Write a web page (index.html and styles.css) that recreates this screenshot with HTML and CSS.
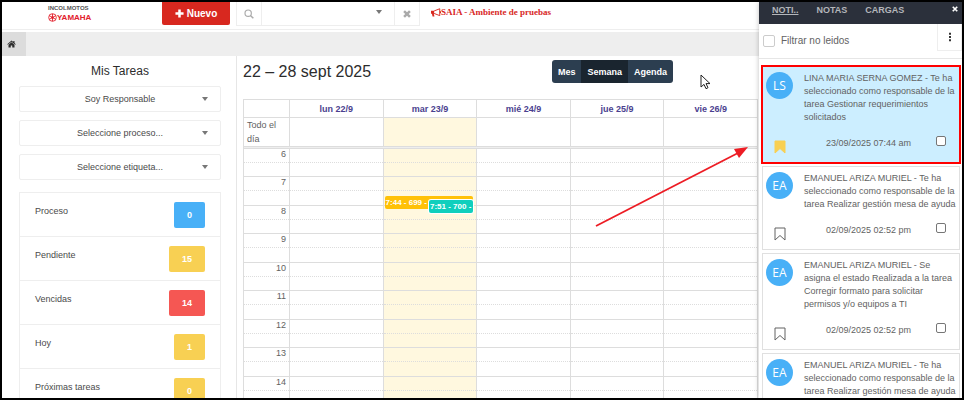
FILE: index.html
```html
<!DOCTYPE html>
<html lang="es">
<head>
<meta charset="UTF-8" />
<meta name="viewport" content="width=device-width, initial-scale=1" />
<title>SAIA - Mis Tareas</title>
<link rel="stylesheet" href="styles.css">
</head>
<body>

<div class="app">
  <div class="workspace">

    <!-- Barra superior -->
    <header class="topbar">
      <div class="logo">
        <span class="logo-company">INCOLMOTOS</span>
        <span class="logo-brand">
          <svg class="logo-mark" viewBox="0 0 20 20" fill="none" stroke="#e2202c" stroke-width="2">
            <circle cx="10" cy="10" r="8.5"/>
            <circle cx="10" cy="10" r="2" fill="#e2202c"/>
            <path d="M10 2v16M3 6l14 8M3 14l14-8"/>
          </svg>YAMAHA
        </span>
      </div>
      <button class="btn-new" type="button">
        <svg viewBox="0 0 10 10" fill="#fff"><path d="M3.6 0.5h2.8v3.1h3.1v2.8H6.4v3.1H3.6V6.4H0.5V3.6h3.1z"/></svg>
        Nuevo
      </button>
      <div class="search">
        <button class="search-btn" type="button" aria-label="Buscar">
          <svg viewBox="0 0 12 12" fill="none" stroke="#aaa" stroke-width="1.4"><circle cx="5" cy="5" r="3.8"/><path d="M8 8l3.2 3.2" stroke-width="1.8"/></svg>
        </button>
        <div class="select-wrap search-select">
          <select aria-label="Búsqueda"><option></option></select>
        </div>
        <button class="search-btn" type="button" aria-label="Limpiar">
          <svg viewBox="0 0 12 12" stroke="#aaa" stroke-width="3"><path d="M2.5 2.5l7 7M9.5 2.5l-7 7"/></svg>
        </button>
      </div>
      <div class="env">
        <svg viewBox="0 0 16 14" fill="#d8281f">
          <path d="M0 4h5v5H0zM1.5 9h3l1 4.500h-3z"/>
          <path d="M5 4.500L14 1v11L5 8.500" fill="none" stroke="#d8281f" stroke-width="1.500"/>
          <path d="M14 5h2v3h-2z"/>
        </svg>SAIA - Ambiente de pruebas
      </div>
    </header>

    <nav class="tabbar">
      <a class="tab-home" href="#" aria-label="Inicio">
        <svg viewBox="0 0 18 16" fill="#2c2c2c"><path d="M9 1L0.500 8.300l1.100 1.300L9 3.400l7.400 6.200 1.100-1.300L15 6.100V1.800h-2.400V4z"/><path d="M9 4.600L3 9.600V15h4.500v-4h3v4H15V9.600z"/></svg>
      </a>
    </nav>

    <div class="columns">
      <!-- Mis tareas -->
      <aside class="tasks">
        <h2>Mis Tareas</h2>
        <div class="select-wrap">
          <select aria-label="Rol"><option>Soy Responsable</option></select>
        </div>
        <div class="select-wrap">
          <select aria-label="Proceso"><option>Seleccione proceso...</option></select>
        </div>
        <div class="select-wrap">
          <select aria-label="Etiqueta"><option>Seleccione etiqueta...</option></select>
        </div>
        <ul class="task-list">
          <li><span>Proceso</span><button class="count blue" type="button">0</button></li>
          <li><span>Pendiente</span><button class="count yellow" type="button">15</button></li>
          <li><span>Vencidas</span><button class="count red" type="button">14</button></li>
          <li><span>Hoy</span><button class="count yellow" type="button">1</button></li>
          <li><span>Próximas tareas</span><button class="count yellow" type="button">0</button></li>
        </ul>
      </aside>

      <!-- Calendario -->
      <main class="calendar">
        <div class="cal-toolbar">
          <h1>22 – 28 sept 2025</h1>
          <div class="views">
            <button type="button">Mes</button>
            <button class="active" type="button">Semana</button>
            <button type="button">Agenda</button>
          </div>
        </div>
        <table class="week">
          <colgroup><col class="axis-col"><col><col class="today"><col><col><col></colgroup>
          <thead>
            <tr><th></th><th>lun 22/9</th><th>mar 23/9</th><th>mié 24/9</th><th>jue 25/9</th><th>vie 26/9</th></tr>
          </thead>
          <tbody class="all-day">
            <tr><td>Todo el día</td><td></td><td></td><td></td><td></td><td></td></tr>
            <tr class="divider"><td colspan="6"></td></tr>
          </tbody>
          <tbody class="slots">
            <tr><td>6</td><td></td><td></td><td></td><td></td><td></td></tr>
            <tr><td></td><td></td><td></td><td></td><td></td><td></td></tr>
            <tr><td>7</td><td></td><td></td><td></td><td></td><td></td></tr>
            <tr>
              <td></td><td></td>
              <td class="has-events">
                <a class="event first" href="#">7:44 - 699 -</a>
                <a class="event second" href="#">7:51 - 700 -</a>
              </td>
              <td></td><td></td><td></td>
            </tr>
            <tr><td>8</td><td></td><td></td><td></td><td></td><td></td></tr>
            <tr><td></td><td></td><td></td><td></td><td></td><td></td></tr>
            <tr><td>9</td><td></td><td></td><td></td><td></td><td></td></tr>
            <tr><td></td><td></td><td></td><td></td><td></td><td></td></tr>
            <tr><td>10</td><td></td><td></td><td></td><td></td><td></td></tr>
            <tr><td></td><td></td><td></td><td></td><td></td><td></td></tr>
            <tr><td>11</td><td></td><td></td><td></td><td></td><td></td></tr>
            <tr><td></td><td></td><td></td><td></td><td></td><td></td></tr>
            <tr><td>12</td><td></td><td></td><td></td><td></td><td></td></tr>
            <tr><td></td><td></td><td></td><td></td><td></td><td></td></tr>
            <tr><td>13</td><td></td><td></td><td></td><td></td><td></td></tr>
            <tr><td></td><td></td><td></td><td></td><td></td><td></td></tr>
            <tr><td>14</td><td></td><td></td><td></td><td></td><td></td></tr>
            <tr><td></td><td></td><td></td><td></td><td></td><td></td></tr>
          </tbody>
        </table>
      </main>
    </div>
  </div>

  <!-- Panel de notificaciones -->
  <section class="panel">
    <div class="panel-tabs">
      <a class="active" href="#">NOTI..</a>
      <a href="#">NOTAS</a>
      <a href="#">CARGAS</a>
      <button class="close" type="button" aria-label="Cerrar">
        <svg viewBox="0 0 8 8" stroke="#fff" stroke-width="2.200"><path d="M1 1l6 6M7 1l-6 6"/></svg>
      </button>
    </div>
    <div class="filter">
      <label><input type="checkbox"> Filtrar no leidos</label>
      <button class="more" type="button" aria-label="Opciones">
        <svg viewBox="0 0 4 12" fill="#333"><path d="M0.800 1h2.400v2.400H0.800zM0.800 4.800h2.400v2.400H0.800zM0.800 8.600h2.400V11H0.800z"/></svg>
      </button>
    </div>
    <div class="cards">
      <article class="card unread">
        <span class="avatar">LS</span>
        <p>LINA MARIA SERNA GOMEZ - Te ha seleccionado como responsable de la tarea Gestionar requerimientos solicitados</p>
        <svg class="bookmark" viewBox="0 0 12 14"><path d="M1 1h10v12L6 8.500 1 13z"/></svg>
        <div class="meta"><time>23/09/2025 07:44 am</time><input type="checkbox" aria-label="Marcar como leída"></div>
      </article>
      <article class="card">
        <span class="avatar">EA</span>
        <p>EMANUEL ARIZA MURIEL - Te ha seleccionado como responsable de la tarea Realizar gestión mesa de ayuda</p>
        <svg class="bookmark" viewBox="0 0 12 14"><path d="M1 1h10v12L6 8.500 1 13z"/></svg>
        <div class="meta"><time>02/09/2025 02:52 pm</time><input type="checkbox" aria-label="Marcar como leída"></div>
      </article>
      <article class="card">
        <span class="avatar">EA</span>
        <p>EMANUEL ARIZA MURIEL - Se asigna el estado Realizada a la tarea Corregir formato para solicitar permisos y/o equipos a TI</p>
        <svg class="bookmark" viewBox="0 0 12 14"><path d="M1 1h10v12L6 8.500 1 13z"/></svg>
        <div class="meta"><time>02/09/2025 02:52 pm</time><input type="checkbox" aria-label="Marcar como leída"></div>
      </article>
      <article class="card">
        <span class="avatar">EA</span>
        <p>EMANUEL ARIZA MURIEL - Te ha seleccionado como responsable de la tarea Realizar gestión mesa de ayuda</p>
      </article>
    </div>

    <!-- Flecha que señala la notificación nueva -->
    <svg class="pointer-arrow" viewBox="0 0 156 84">
      <path d="M2 81L144 8" stroke="#ed1c24" stroke-width="1.800"/>
      <path d="M154 2L140 4l5 9z" fill="#ed1c24"/>
    </svg>
    <svg class="cursor" viewBox="0 0 11 16">
      <path d="M1 1v12l3-2.600 2 4.300 2-1-2-4.100h4z" fill="#fff" stroke="#222"/>
    </svg>
  </section>
</div>

</body>
</html>
```
FILE: styles.css
```css
* {
  margin: 0;
  padding: 0;
  box-sizing: border-box;
}
body {
  font-family: "Liberation Sans", Arial, sans-serif;
  font-size: 9px;
  line-height: 14px;
  color: #4a4a4a;
  background: #fff;
}
button, select, input {
  font: inherit;
  color: inherit;
}
button {
  border: none;
  background: none;
}
a {
  color: inherit;
  text-decoration: none;
}
svg {
  display: block;
}

.app {
  display: flex;
  height: 100vh;
  border: 2px solid #000;
  overflow: hidden;
}
.workspace {
  flex: 1;
  min-width: 0;
}

/* Barra superior */
.topbar {
  display: flex;
  align-items: flex-start;
  height: 28px;
  border-bottom: 1px solid #eee;
}
.logo {
  width: 160px;
  padding: 2px 0 0 46px;
  font-weight: bold;
}
.logo-company {
  display: block;
  font-size: 6px;
  line-height: 9px;
  color: #555;
}
.logo-brand {
  display: flex;
  align-items: center;
  font-size: 8px;
  line-height: 9px;
  color: #e2202c;
}
.logo-mark {
  width: 9px;
  height: 9px;
}
.btn-new {
  display: flex;
  align-items: center;
  justify-content: center;
  gap: 3px;
  width: 68px;
  height: 23px;
  border-radius: 0 0 2px 2px;
  background: #d8281f;
  color: #fff;
  font-size: 10px;
  font-weight: bold;
}
.btn-new svg {
  width: 9px;
  height: 9px;
}
.search {
  display: flex;
  height: 24px;
  margin-left: 6px;
  border: 1px solid #eee;
  border-top: none;
}
.search-btn {
  display: flex;
  align-items: center;
  justify-content: center;
  width: 24px;
}
.search-btn svg {
  width: 10px;
  height: 10px;
}
.select-wrap {
  position: relative;
}
.select-wrap::after {
  content: "";
  position: absolute;
  right: 12px;
  top: 50%;
  margin-top: -2px;
  border: 3px solid transparent;
  border-top: 4px solid #777;
  border-bottom: none;
  pointer-events: none;
}
.select-wrap select {
  appearance: none;
  width: 100%;
  height: 100%;
  border: none;
  background: transparent;
  text-align-last: center;
}
.search-select {
  width: 134px;
  border-left: 1px solid #eee;
  border-right: 1px solid #eee;
}
.search-select::after {
  top: 8px;
  margin-top: 0;
}
.env {
  display: flex;
  align-items: center;
  height: 20px;
  margin-left: 11px;
  font-family: "Liberation Serif", "Times New Roman", serif;
  font-weight: bold;
  color: #d8281f;
}
.env svg {
  width: 10px;
  height: 9px;
}

/* Pestañas */
.tabbar {
  height: 24px;
  margin-top: 2px;
  background: #eee;
}
.tab-home {
  display: flex;
  align-items: center;
  justify-content: center;
  width: 24px;
  height: 24px;
  padding-right: 5px;
  background: #dcdcdc;
}
.tab-home svg {
  width: 9px;
  height: 8px;
}

.columns {
  display: flex;
}

/* Mis tareas */
.tasks {
  width: 235px;
  padding: 6px 15px 0 17px;
  border-right: 1px solid #e6e6e6;
}
.tasks h2 {
  font-size: 12px;
  font-weight: normal;
  line-height: 18px;
  margin-bottom: 6px;
  text-align: center;
  color: #2c2c2c;
}
.tasks .select-wrap {
  height: 26px;
  margin-bottom: 8px;
  border: 1px solid #eee;
  border-radius: 2px;
}
.task-list {
  list-style: none;
  margin-top: 12px;
  border: 1px solid #eee;
}
.task-list li {
  display: flex;
  justify-content: space-between;
  height: 44px;
  padding: 9px 15px;
  border-bottom: 1px solid #eee;
}
.task-list span {
  padding-top: 2px;
}
.count {
  height: 26px;
  padding: 0 13px;
  border-radius: 2px;
  color: #fff;
  font-weight: bold;
}
.blue { background: #48b0f7; }
.yellow { background: #f8d053; }
.red { background: #f55753; }

/* Calendario */
.calendar {
  flex: 1;
  min-width: 0;
  padding: 4px 1px 0 6px;
}
.cal-toolbar {
  display: flex;
  align-items: center;
  justify-content: space-between;
  padding-right: 85px;
  height: 23px;
  margin-bottom: 16px;
}
.cal-toolbar h1 {
  font-size: 16px;
  font-weight: normal;
  color: #2c2c2c;
}
.views {
  display: flex;
  border-radius: 3px;
  overflow: hidden;
}
.views button {
  height: 23px;
  padding: 0 6px;
  background: #2c3e50;
  color: #fff;
  font-weight: bold;
}
.views .active {
  background: #1a252f;
}
.week {
  width: 100%;
  table-layout: fixed;
  border-collapse: collapse;
  color: #626262;
}
.axis-col {
  width: 46px;
}
.today {
  background: #fff8df;
}
.week th, .week td {
  border: 1px solid #ddd;
}
.week th {
  height: 18px;
  color: #4b3f8f;
  background: #fff;
}
.all-day td {
  height: 29px;
  padding-left: 3px;
}
.week .divider td {
  height: 2px;
  padding: 0;
  background: #eee;
}
.slots td {
  height: 14px;
  line-height: 10px;
  vertical-align: top;
  border-bottom: 1px dotted #ddd;
}
.slots tr:nth-child(4n) td {
  height: 15px;
}
.slots tr:nth-child(even) td {
  border-top: 1px dotted #ddd;
  border-bottom: 1px solid #ddd;
}
.slots td:first-child {
  padding-right: 3px;
  text-align: right;
}
.has-events {
  position: relative;
}
.event {
  position: absolute;
  right: 3px;
  height: 13px;
  padding-left: 1px;
  border-radius: 2px;
  overflow: hidden;
  white-space: nowrap;
  font-size: 8px;
  font-weight: bold;
  line-height: 14px;
  color: #fff;
}
.first {
  top: 5px;
  left: 1px;
  background: #ffc107;
}
.second {
  top: 9px;
  left: 49%;
  background: #10cfbd;
  box-shadow: 0 0 0 1px #fff;
}

/* Panel de notificaciones */
.panel {
  position: relative;
  width: 203px;
  background: #fff;
  box-shadow: 0 0 5px rgba(0, 0, 0, 0.25);
  color: #626262;
}
.panel-tabs {
  display: flex;
  align-items: flex-start;
  gap: 18px;
  height: 22px;
  padding: 1px 2px 0 13px;
  background: #2b303b;
  color: #b4b6ba;
  font-weight: bold;
}
.panel-tabs .active {
  text-decoration: underline;
}
.close {
  margin-left: auto;
  padding: 3px 2px;
}
.close svg {
  width: 6px;
  height: 6px;
}
.filter {
  display: flex;
  justify-content: space-between;
  height: 35px;
  padding-left: 4px;
  border-bottom: 1px solid #e6e6e6;
}
.filter label {
  display: flex;
  align-items: center;
  gap: 6px;
  font-size: 10px;
}
input[type="checkbox"] {
  appearance: none;
  border: 1px solid #767676;
  border-radius: 2px;
  background: #fff;
}
.filter input[type="checkbox"] {
  width: 12px;
  height: 12px;
  border-color: #ccc;
}
.more {
  display: flex;
  justify-content: center;
  width: 25px;
  height: 27px;
  padding-top: 8px;
  border: 1px solid #eee;
  border-top: none;
}
.more svg {
  width: 4px;
  height: 10px;
}
.cards {
  display: flex;
  flex-direction: column;
  gap: 3px;
  padding: 7px 2px 0 3px;
}
.card {
  display: grid;
  grid-template-columns: 28px 1fr;
  column-gap: 10px;
  padding: 5px 0 4px 3px;
  border: 1px solid #e0e0e0;
}
.card.unread {
  background: #cceeff;
  outline: 2px solid #ff0000;
  outline-offset: -1px;
}
.avatar {
  width: 27px;
  height: 27px;
  border-radius: 50%;
  background: #48b0f7;
  color: #fff;
  font-family: "Open Sans", "Noto Sans", sans-serif;
  font-size: 12px;
  line-height: 27px;
  text-align: center;
}
.card p {
  line-height: 13px;
}
.bookmark {
  align-self: end;
  justify-self: center;
  width: 12px;
  height: 14px;
  margin-bottom: 4px;
  fill: none;
  stroke: #626262;
}
.unread .bookmark {
  fill: #f8d053;
  stroke: #f8d053;
}
.meta {
  display: flex;
  justify-content: space-between;
  padding: 12px 13px 8px 22px;
}
.meta input[type="checkbox"] {
  width: 10px;
  height: 10px;
}

/* Elementos sobre el calendario */
.pointer-arrow {
  position: absolute;
  left: -165px;
  top: 143px;
  width: 156px;
  height: 84px;
}
.cursor {
  position: absolute;
  left: -59px;
  top: 72px;
  width: 11px;
  height: 16px;
}
```
